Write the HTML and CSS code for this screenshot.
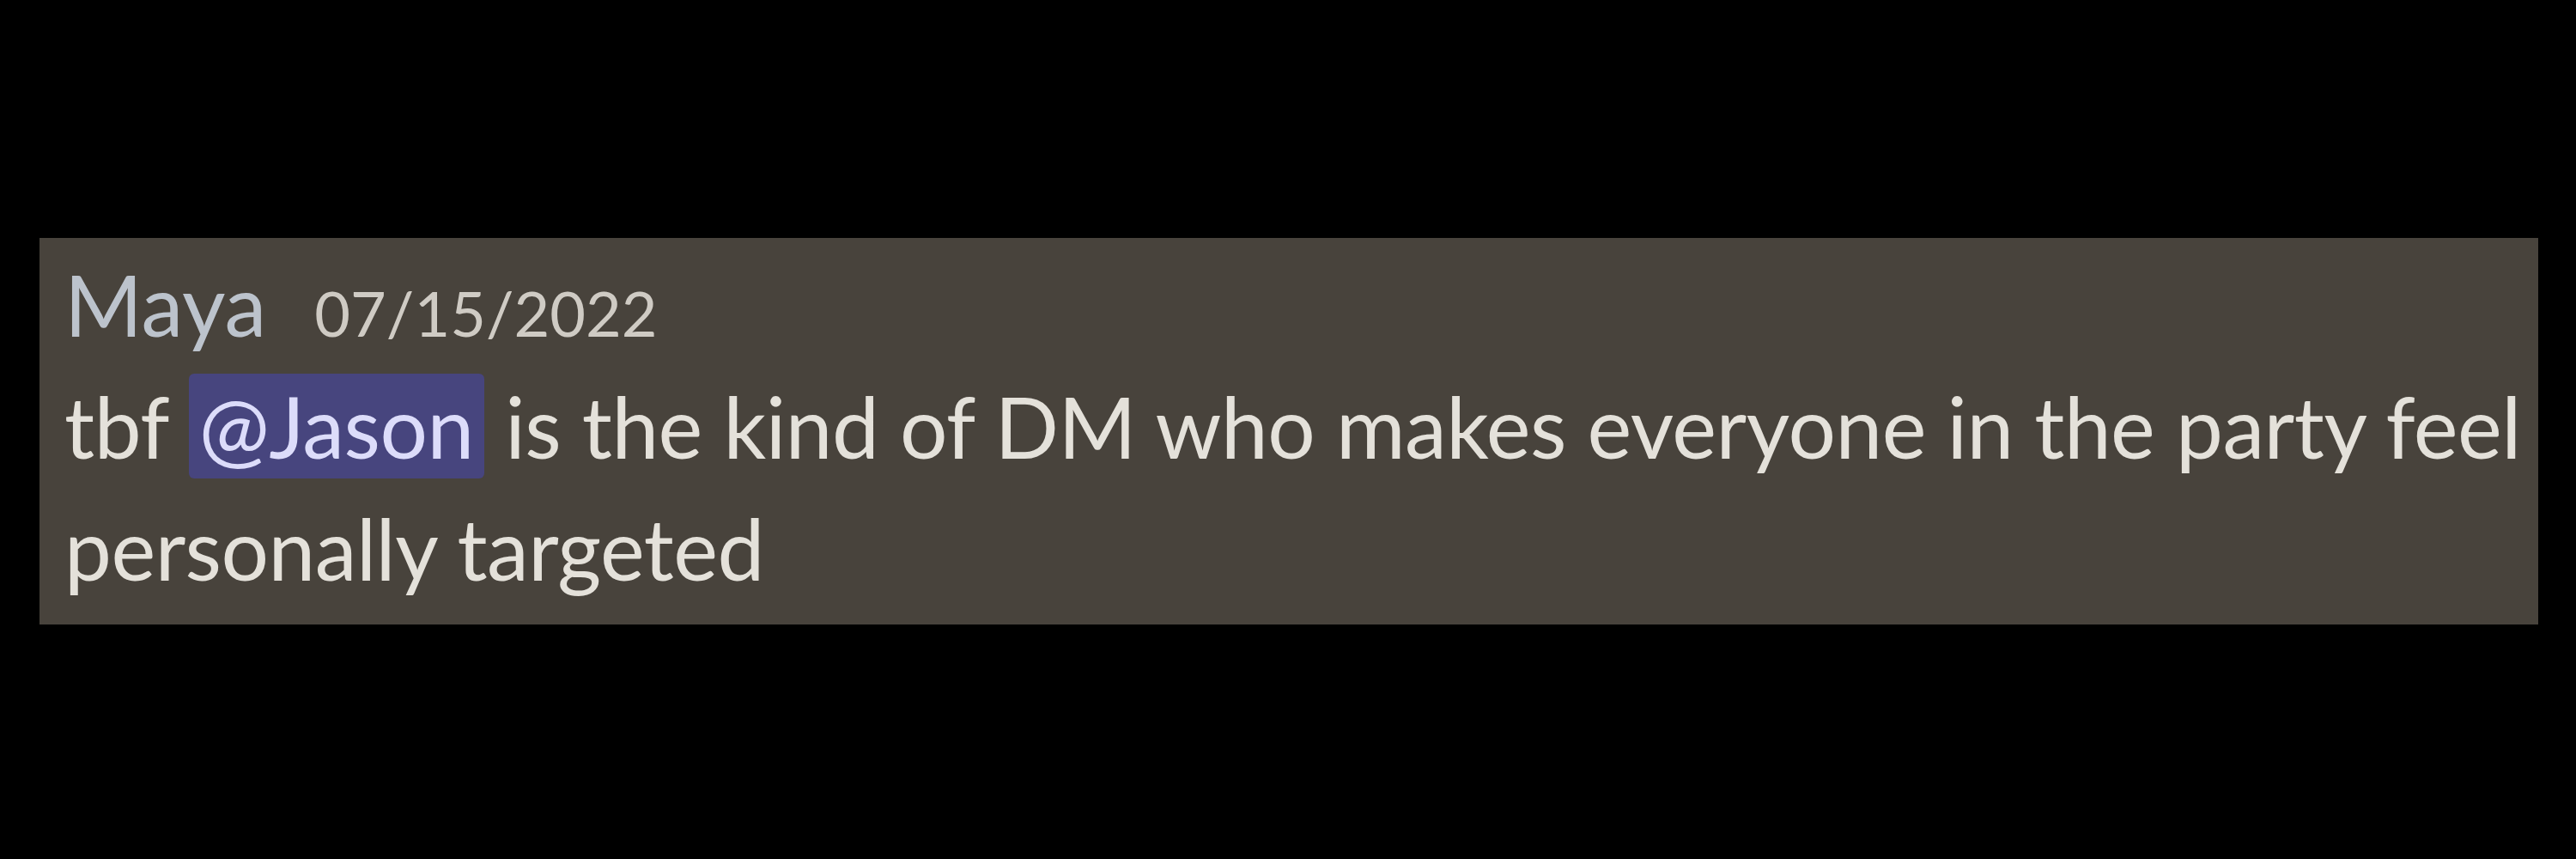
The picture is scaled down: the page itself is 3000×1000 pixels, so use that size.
FILE: index.html
```html
<!DOCTYPE html>
<html lang="en">
<head>
    <meta charset="UTF-8">
    <title>Maya - message</title>
    <link rel="stylesheet" href="styles.css">
</head>
<body>
    <div class="message">
        <div class="message-header">
            <span class="username">Maya</span>
            <span class="timestamp">07/15/2022</span>
        </div>
        <div class="message-content">
            tbf <span class="mention">@Jason</span> is the kind of DM who makes everyone in the party feel personally targeted
        </div>
    </div>
</body>
</html>
```

FILE: styles.css
```css
body {
    margin: 0;
    padding: 0;
    background-color: #000;
    font-family: 'Lato', 'Open Sans', sans-serif;
}

.message {
    margin: 277px 0 0 46px;
    width: 2910px;
    height: 450px;
    box-sizing: border-box;
    padding: 6px 0 0 29px;
    background-color: #48433c;
    font-size: 98px;
    line-height: 142px;
}

.message-header {
    display: flex;
    align-items: baseline;
    gap: 56px;
}

.username {
    color: #bcc3cc;
}

.timestamp {
    color: #cfcbc4;
    font-size: 72px;
    line-height: 1;
}

.message-content {
    color: #e4e1da;
    letter-spacing: -0.5px;
}

.mention {
    padding: 2px 12px;
    border-radius: 6px;
    background-color: #47457e;
    color: #dcdcfa;
}
```
